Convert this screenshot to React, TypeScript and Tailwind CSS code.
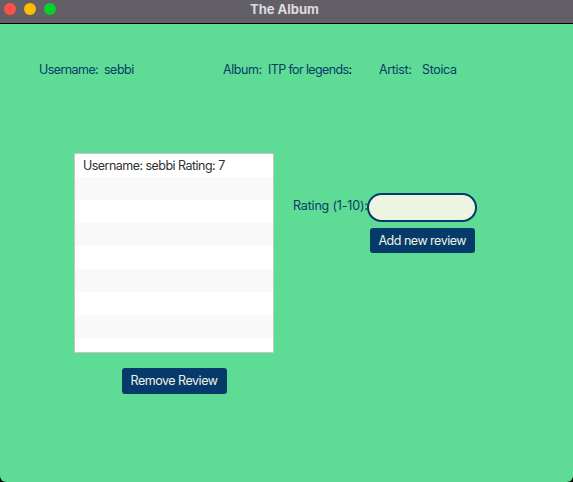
const rows = ["Username: sebbi Rating: 7", "", "", "", "", "", "", "", ""];

function TitleBar() {
  return (
    <header className="relative flex h-6 items-start gap-2 border-b border-black bg-[#635f66] pl-1 pt-[3px]">
      <span className="size-3 rounded-full bg-[#ff4f48]" />
      <span className="size-3 rounded-full bg-[#ffbd00]" />
      <span className="size-3 rounded-full bg-[#00d12c]" />
      <h1 className="absolute inset-x-0 top-0 pr-1 text-center text-[13px] leading-[18px] font-bold tracking-[-0.02px] text-[#dedbdf]">
        The Album
      </h1>
    </header>
  );
}

function Details() {
  return (
    <div className="flex pl-[39px] pt-[37px] leading-[18px]">
      <span className="w-[65px] tracking-[-0.58px]">Username:</span>
      <span className="w-[119px] tracking-[-0.5px]">sebbi</span>
      <span className="w-[45px] tracking-[-0.45px]">Album:</span>
      <span className="w-[111px] tracking-[-0.62px]">
        ITP for legends<span className="text-black">:</span>
      </span>
      <span className="w-[43px] tracking-[-0.35px]">Artist:</span>
      <span className="tracking-[-0.35px]">Stoica</span>
    </div>
  );
}

export default function App() {
  return (
    <div className="h-[482px] w-[573px] overflow-hidden whitespace-nowrap bg-black font-['Inter','Liberation_Sans',sans-serif] text-[12.5px] text-[#0a3b68]">
      <div className="flex h-full flex-col overflow-hidden rounded-b-[6px] bg-[#5edc96]">
        <TitleBar />
        <Details />
        <main className="flex items-start pl-[74px] pt-[74px]">
          <section className="flex w-[200px] flex-col items-center">
            <ul className="h-[200px] w-full overflow-hidden border border-[#c3c7c4] bg-white text-[#303030]">
              {rows.map((row, i) => (
                <li key={i} className="h-[23px] pl-2 leading-[23px] tracking-[-0.53px] even:bg-[#f9f9f9]">
                  {row}
                </li>
              ))}
            </ul>
            <button className="mt-[15px] h-[26px] w-[105px] rounded-[3px] bg-[#053a6b] leading-[26px] tracking-[-0.48px] text-[#eef4e1]">
              Remove Review
            </button>
          </section>
          <section className="ml-[19px] flex pt-10">
            <label htmlFor="rating" className="w-[74px] pt-1 leading-[18px] tracking-[-0.18px]">
              Rating (1-10):
            </label>
            <div className="flex flex-col">
              <input
                id="rating"
                className="h-[29px] w-[110px] rounded-full border-2 border-[#053a6b] bg-[#edf4e0] px-3 outline-none"
              />
              <button className="ml-[2.5px] mt-[5.5px] h-[25.5px] w-[105.5px] rounded-[3px] bg-[#053a6b] leading-[26px] tracking-[-0.5px] text-[#eef4e1]">
                Add new review
              </button>
            </div>
          </section>
        </main>
      </div>
    </div>
  );
}
